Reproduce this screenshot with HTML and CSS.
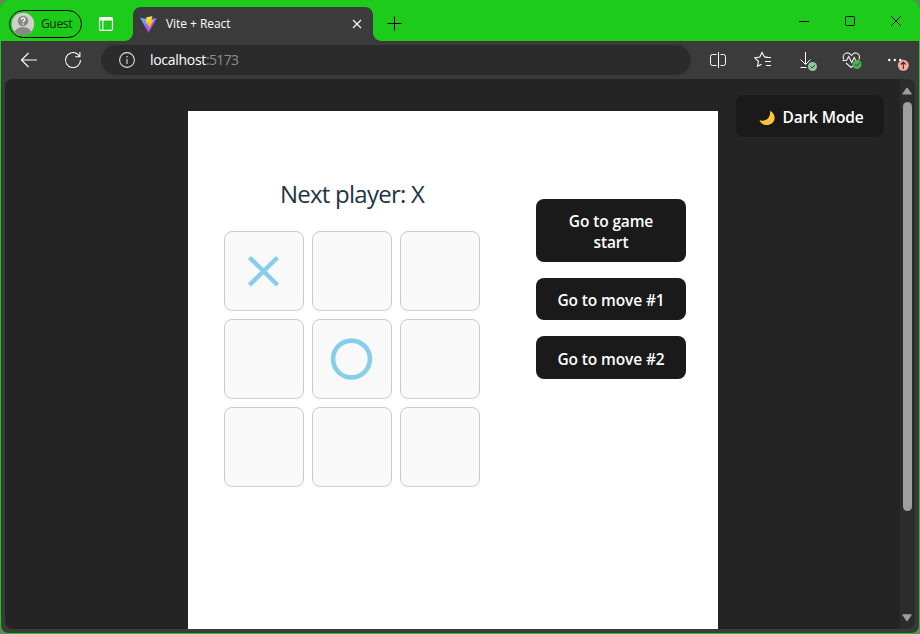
FILE: index.html
```html
<!DOCTYPE html>
<html lang="en">
<head>
<meta charset="utf-8">
<title>Vite + React</title>
<link rel="stylesheet" href="styles.css">
</head>
<body>
<div class="window">
  <header class="titlebar">
    <div class="profile">
      <svg class="avatar" viewBox="0 0 24 24"><defs><clipPath id="av"><circle cx="12" cy="12" r="11.2"/></clipPath></defs><circle cx="12" cy="12" r="11.2" fill="#d2d0ce"/><g clip-path="url(#av)"><circle cx="12" cy="9" r="5.3" fill="#8a8886"/><ellipse cx="12" cy="21" rx="8.5" ry="6" fill="#8a8886"/></g><path d="M10.2 7.8q.1-1.9 1.9-1.9 1.8.1 1.7 1.7-.2 1-1.3 1.6-.5.4-.5 1.1" fill="none" stroke="#fff" stroke-width="1.2"/><circle cx="12" cy="12" r=".75" fill="#fff"/></svg>
      <span class="guest">Guest</span>
    </div>
    <svg class="tabs-icon" viewBox="0 0 16 16" fill="none" stroke="#fff"><rect x="1.5" y="1.6" width="13" height="12.8" rx="1.6" stroke-width="1.2"/><path d="M1.5 3h13" stroke-width="3"/><path d="M4.9 4v10.3"/></svg>
    <div class="tab">
      <svg class="vite" viewBox="0 0 410 404"><defs><linearGradient id="va" x1="6" y1="33" x2="235" y2="344" gradientUnits="userSpaceOnUse"><stop stop-color="#41d1ff"/><stop offset="1" stop-color="#bd34fe"/></linearGradient><linearGradient id="vb" x1="194" y1="9" x2="236" y2="293" gradientUnits="userSpaceOnUse"><stop stop-color="#ffea83"/><stop offset=".1" stop-color="#ffdd35"/><stop offset="1" stop-color="#ffa800"/></linearGradient></defs><path fill="url(#va)" d="M399.600 59.500 215.600 388.500c-3.800 6.800-13.600 6.800-17.400.1L10.600 59.600c-4.200-7.400 2.100-16.300 10.500-14.800l184.200 32.900c1.200.2 2.400.2 3.500 0l180.300-32.900c8.300-1.500 14.700 7.300 10.500 14.700z"/><path fill="url(#vb)" d="M293 1.600 156.800 28.300a5 5 0 0 0-4 4.600l-8.400 141.500c-.2 3.300 2.900 5.900 6.100 5.200l37.900-8.800c3.600-.8 6.800 2.400 6.100 5.900l-11.300 55.200c-.8 3.700 2.800 6.900 6.400 5.800l23.500-7.100c3.600-1.100 7.200 2.100 6.400 5.800l-17.900 86.700c-1.100 5.400 6.100 8.400 9.100 3.700l2-3.100L323.600 102.500c1.900-3.700-1.300-7.900-5.400-7.100l-39 7.500c-3.700.7-6.800-2.700-5.800-6.300l25.500-88.200c1-3.700-2.200-7.100-5.900-6.800z"/></svg>
      <span class="tab-title">Vite + React</span>
      <svg class="tab-close" viewBox="0 0 10 10" stroke="#fff" stroke-width="1.1"><path d="m1 1 8 8M9 1 1 9"/></svg>
    </div>
    <svg class="new-tab" viewBox="0 0 15 15" stroke="#000" stroke-width="1.1"><path d="M.5 7.500h14M7.500.5v14"/></svg>
    <div class="controls">
      <svg viewBox="0 0 12 12" fill="none" stroke="#000"><path d="M1 6.500h10"/></svg>
      <svg viewBox="0 0 12 12" fill="none" stroke="#000"><rect x="1.500" y="1.500" width="9" height="9" rx="1.200"/></svg>
      <svg viewBox="0 0 12 12" fill="none" stroke="#000"><path d="m1 1 10 10M11 1 1 11"/></svg>
    </div>
  </header>
  <nav class="toolbar">
    <svg class="back" viewBox="0 0 18 18" fill="none" stroke="#fff" stroke-width="1.1"><path d="M17 9H1.500M8.500 2l-7 7 7 7"/></svg>
    <svg class="reload" viewBox="0 0 18 18" fill="none" stroke="#fff" stroke-width="1.1"><path d="M16.500 9A7.500 7.500 0 1 1 13 2.700l2.500 2.500M15.900 1v4.700h-4.700"/></svg>
    <div class="address">
      <svg class="info" viewBox="0 0 18 18"><circle cx="9" cy="9" r="7.400" fill="none" stroke="#ddd" stroke-width="1.100"/><path d="M9 8v5" stroke="#ddd" stroke-width="1.100"/><circle cx="9" cy="5.700" r=".8" fill="#ddd"/></svg>
      <span class="host">localhost</span><span class="port">:5173</span>
    </div>
    <div class="tools">
      <svg viewBox="0 0 26 24" fill="none" stroke="#fff"><path d="M10.500 6.500h-4a2 2 0 0 0-2 2v7a2 2 0 0 0 2 2h4M14.500 6.500h3a2 2 0 0 1 2 2v7a2 2 0 0 1-2 2h-3M12.500 4v16"/></svg>
      <svg viewBox="0 0 26 24" fill="none" stroke="#fff"><path d="m17 9.400-3.500-.5L11 4.500 8.800 9l-5 .8 3.600 3.500-.9 5 4-2M15 9.500h5M14 13.500h6M15 17.500h5" stroke-width="1.100"/></svg>
      <svg viewBox="0 0 26 24" fill="none" stroke="#fff"><path d="M10.500 4v12M5.500 11.500l5 5 5-5M5.500 19.500h6"/><circle cx="17.500" cy="18.500" r="4.500" fill="#89ca98" stroke="none"/><path d="m15.500 18.500 1.500 1.500 3-3" stroke="#294c30"/></svg>
      <svg viewBox="0 0 26 24" fill="none" stroke="#eee"><path d="M3.700 11.500C1.500 5.500 8 2.500 11.500 7.500 15 2.500 21 5.500 19 11.500M2.500 12.500h4l2.200-4 3 6 2.500-5 1.600 3H19M6 15l5 4.500 3-2.500" stroke-width="1.100"/><circle cx="17" cy="16.500" r="4.500" fill="#4caf50" stroke="none"/><path d="m15 16.500 1.500 1.500 3-3" stroke="#173b1b"/></svg>
      <svg viewBox="0 0 26 24" fill="none"><g fill="#fff"><circle cx="5.300" cy="12" r="1.200"/><circle cx="10.800" cy="12" r="1.200"/><circle cx="16.300" cy="12" r="1.200"/></g><circle cx="19.300" cy="17.300" r="5.500" fill="#f4aaa5"/><path d="M19.300 21v-7M16.800 16.500l2.500-2.500 2.500 2.500" stroke="#482522" stroke-width="1.100"/></svg>
    </div>
  </nav>
  <main class="viewport">
    <div class="page">
      <section class="game">
        <div class="board-side">
          <h1 class="status">Next player: X</h1>
          <div class="board">
            <div class="square"><svg viewBox="0 0 78 78"><path d="m24.500 25.500 28 27.500M52.500 25.500 24.500 53" stroke="#87ceeb" stroke-width="4.500"/></svg></div>
            <div class="square"></div><div class="square"></div><div class="square"></div>
            <div class="square"><svg viewBox="0 0 78 78"><circle cx="38.500" cy="39" r="18.400" fill="none" stroke="#87ceeb" stroke-width="4.600"/></svg></div>
            <div class="square"></div><div class="square"></div><div class="square"></div><div class="square"></div>
          </div>
        </div>
        <div class="moves">
          <button class="move first">Go to game<br>start</button>
          <button class="move">Go to move #1</button>
          <button class="move last">Go to move #2</button>
        </div>
      </section>
      <button class="mode"><svg class="moon" viewBox="0 0 16 16"><path d="M11 .8c5.500 3 6 9 2 12.500-4 3.300-10.500 2-12.500-3 5.500 1.500 11.500-1.500 10.500-9.500z" fill="#ffc83d"/><path d="M.5 10.300c5 2.500 11.500 1 14-4 .5 7.500-9.500 12-14 4z" fill="#f4b23a" opacity=".4"/></svg><span class="mode-label">Dark Mode</span></button>
    </div>
    <div class="scrollbar">
      <svg class="arrow" viewBox="0 0 10 8"><path d="M5 .8 9.300 7H.7z" fill="#9f9f9f" stroke="#9f9f9f" stroke-linejoin="round"/></svg>
      <div class="thumb"></div>
      <svg class="arrow down" viewBox="0 0 10 8"><path d="M5 7 .7.8h8.600z" fill="#9f9f9f" stroke="#9f9f9f" stroke-linejoin="round"/></svg>
    </div>
  </main>
</div>
</body>
</html>
```
FILE: styles.css
```css
* { box-sizing: border-box; }
body { margin: 0; background: #777; font-family: "Open Sans", "Noto Sans", sans-serif; overflow: hidden; }
svg { display: block; flex: none; }
span { white-space: nowrap; }
.window { width: 920px; height: 634px; display: flex; flex-direction: column; background: #3b3b3b; border: 1px solid #1dcc1b; border-top: 0; border-radius: 8px; overflow: hidden; }
.titlebar { height: 41px; flex: none; display: flex; align-items: flex-start; background: #1dcc1b; padding-left: 8px; }
.profile { width: 73px; height: 28px; margin-top: 10px; border: 1px solid #000; border-radius: 14px; display: flex; align-items: center; padding-left: 1px; }
.avatar { width: 24px; height: 24px; }
.guest { margin-left: 6px; font-size: 12px; line-height: 16px; letter-spacing: -.35px; color: #062d06; }
.tabs-icon { width: 16px; height: 16px; margin: 16px 0 0 16px; }
.tab { position: relative; width: 240px; height: 34px; margin: 7px 0 0 19px; padding: 0 11px 0 6.5px; display: flex; align-items: center; background: #3b3b3b; border-radius: 8px 8px 0 0; }
.tab::before, .tab::after { content: ""; position: absolute; bottom: 0; width: 8px; height: 8px; }
.tab::before { left: -8px; background: radial-gradient(circle at 0 0, transparent 7.5px, #3b3b3b 8px); }
.tab::after { right: -8px; background: radial-gradient(circle at 100% 0, transparent 7.5px, #3b3b3b 8px); }
.vite { width: 17px; height: 17px; }
.tab-title { flex: 1; margin-left: 9.5px; font-size: 12px; letter-spacing: -.05px; line-height: 16px; color: #fff; }
.tab-close { width: 10px; height: 10px; }
.new-tab { width: 15px; height: 15px; margin: 16px 0 0 14px; }
.controls { margin: 15px 17px 0 auto; display: flex; gap: 34px; }
.controls svg { width: 12px; height: 12px; }
.toolbar { height: 38px; flex: none; display: flex; align-items: center; padding: 0 0 0 19px; }
.back { width: 18px; height: 18px; }
.reload { width: 18px; height: 18px; margin-left: 26px; }
.address { width: 590px; height: 30px; margin-left: 19px; padding-left: 17px; display: flex; align-items: center; border-radius: 15px; background: #2b2b2b; font-size: 14px; line-height: 20px; }
.info { width: 18px; height: 18px; margin-right: 14px; }
.host { color: #fff; letter-spacing: -.3px; }
.port { color: #8d8d8d; letter-spacing: -.65px; }
.tools { display: flex; gap: 18.5px; margin-left: 15px; }
.tools svg { width: 26px; height: 24px; }
.viewport { flex: 1; min-height: 0; margin: 0 4px 4px; display: flex; border-radius: 8px; overflow: hidden; background: #242424; }
.page { flex: 1; display: flex; align-items: flex-start; padding: 16px 16px 0 183px; }
.game { width: 530px; height: 534px; margin-top: 16px; padding: 68px 32px 0 36px; display: flex; justify-content: space-between; background: #fff; }
.board-side { width: 256px; }
.status { margin: -1px 0 21px; font-size: 24px; line-height: 32px; font-weight: 400; letter-spacing: -.75px; text-align: center; color: #213547; }
.board { display: grid; grid-template-columns: repeat(3, 80px); grid-auto-rows: 80px; gap: 8px; }
.square { border: 1px solid #ccc; border-radius: 8px; background: #f9f9f9; }
.square svg { width: 78px; height: 78px; }
.moves { width: 150px; padding-top: 20px; display: flex; flex-direction: column; gap: 16px; }
button { border: 0; border-radius: 8px; background: #1a1a1a; color: #fff; font-family: inherit; font-size: 15.5px; line-height: 21px; font-weight: 600; letter-spacing: -.13px; padding: 0; }
.move { height: 42px; padding-top: 3px; white-space: nowrap; }
.move.first { height: 63px; }
.move.last { height: 43px; }
.mode { width: 148px; height: 42px; margin-left: 18px; display: flex; align-items: center; justify-content: center; padding: 3px 0 0 3px; }
.moon { width: 16px; height: 16px; margin-right: 7px; }
.scrollbar { width: 15px; flex: none; background: #2c2c2c; display: flex; flex-direction: column; align-items: center; padding: 8px 0 7px; }
.arrow { width: 10px; height: 8px; margin-left: -1px; }
.thumb { width: 9px; height: 409px; margin-top: 7px; border-radius: 5px; background: #9f9f9f; }
.down { margin-top: auto; }
```
